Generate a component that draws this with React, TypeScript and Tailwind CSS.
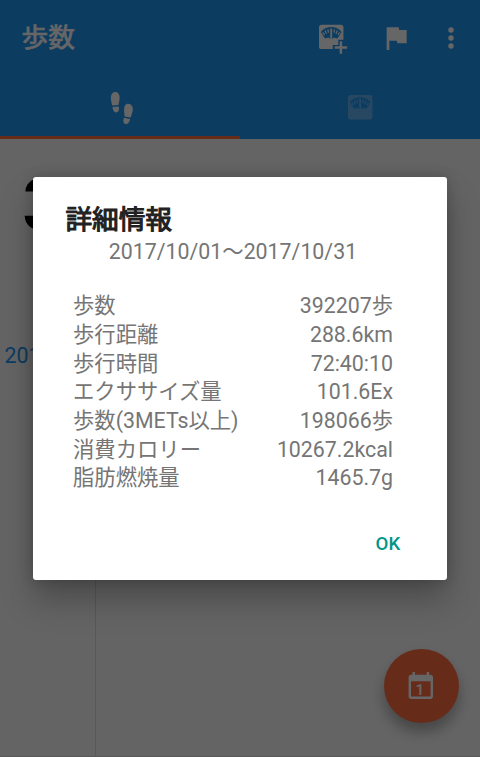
import React from 'react';

interface DetailRow {
  label: string;
  value: string;
}

const details: DetailRow[] = [
  { label: '歩数', value: '392207歩' },
  { label: '歩行距離', value: '288.6km' },
  { label: '歩行時間', value: '72:40:10' },
  { label: 'エクササイズ量', value: '101.6Ex' },
  { label: '歩数(3METs以上)', value: '198066歩' },
  { label: '消費カロリー', value: '10267.2kcal' },
  { label: '脂肪燃焼量', value: '1465.7g' },
];

// Rounded plate with the dial of a bathroom scale
const ScalePlate: React.FC = () => (
  <>
    <rect x="0" y="0" width="24.4" height="24.4" rx="2.6" fill="#fff" />
    <path d="M1.800 7.200C4.400 3.800 8 2.200 12.200 2.200s7.800 1.600 10.400 5l-4.200 6.600-3.600-.9-1 .9h-3.200l-1-.9-3.600.9z" fill="#2196f3" />
    <g stroke="#fff">
      <path d="M12.200 3.800V14" strokeWidth="1.800" />
      <path d="M8.900 4.600L9.500 8" strokeWidth="1.200" />
      <path d="M15.500 4.600L14.900 8" strokeWidth="1.200" />
      <path d="M6.100 5.800L7.500 9" strokeWidth="1.200" />
      <path d="M18.300 5.800L16.900 9" strokeWidth="1.200" />
      <path d="M3.800 7.700L5.600 10.300" strokeWidth="1.200" />
      <path d="M20.600 7.700L18.800 10.300" strokeWidth="1.200" />
    </g>
  </>
);

const ScaleAddIcon: React.FC = () => (
  <svg width="32" height="32" viewBox="0 0 32 32">
    <g transform="translate(2 2.700)">
      <ScalePlate />
    </g>
    <path d="M15.800 28.500v-5.500h5.500v-5.300h6V29z" fill="#2196f3" />
    <path d="M22.700 19.300h2.400v5h5v2.400h-5v5h-2.400v-5h-5v-2.400h5z" fill="#fff" />
  </svg>
);

const ScaleIcon: React.FC = () => (
  <svg className="opacity-30" width="25" height="25" viewBox="0 0 25 25">
    <ScalePlate />
  </svg>
);

const FlagIcon: React.FC = () => (
  <svg width="32" height="32" viewBox="0 0 24 24" fill="#fff">
    <path d="M14.400 6L14 4H5v17h2v-7h5.600l.4 2h7V6z" />
  </svg>
);

const MoreIcon: React.FC = () => (
  <svg width="8" height="32" viewBox="0 0 8 32" fill="#fff">
    <circle cx="4" cy="8" r="2.700" />
    <circle cx="4" cy="16" r="2.700" />
    <circle cx="4" cy="24" r="2.700" />
  </svg>
);

const StepsIcon: React.FC = () => (
  <svg width="24" height="34" viewBox="0 0 24 34" fill="#fff">
    <path d="M5.300 1C2.500 1 .9 3.500.9 6.800c0 2.800.8 5 1.300 7.700l6.300-.4c0-2.300 1.100-4.200 1.100-7.200C9.600 3.500 8.300 1 5.300 1z" />
    <path d="M2.500 16.100l6.300-.5c.6 3.200-.1 5.600-2.300 5.800-2.500.2-3.700-2-4-5.300z" />
    <path d="M18.400 12.700c2.900.2 4.700 2.900 4.400 6.200-.3 2.900-1.600 5-2.100 7.600l-6.200-1.100c.2-2.400-.7-4.300-.4-7.300.3-3.200 1.500-5.600 4.300-5.400z" />
    <path d="M13.900 26.800l6.200 1.200c-.5 3.100-2.200 5.300-4.500 5-2.300-.3-2.700-3-1.700-6.200z" />
  </svg>
);

const CalendarIcon: React.FC = () => (
  <svg width="26" height="28" viewBox="0 0 26 28">
    <path d="M4.500 0h2.400v2.800h11.800V0h2.400v2.800h1.400c1.400 0 2.500 1.100 2.500 2.500v19.200c0 1.400-1.100 2.500-2.500 2.500h-19.400c-1.400 0-2.500-1.100-2.500-2.500V5.300c0-1.400 1.100-2.500 2.500-2.500h1.400zM3 9.300v15.200h19.600V9.300z" fill="#fff" fillRule="evenodd" />
    <text x="12" y="22.500" textAnchor="middle" className="font-['Roboto',sans-serif] text-[15.500px] font-medium" fill="#fff">1</text>
  </svg>
);

const DetailDialog: React.FC = () => (
  <div
    role="dialog"
    className="mt-[177px] ml-[33.400px] h-[403px] w-[413.400px] rounded-[3px] bg-white pt-[24.500px] shadow-[0_20px_32px_rgba(0,0,0,0.25),0_0_14px_rgba(0,0,0,0.2)]"
  >
    <h2 className="pl-8 text-[26.67px] leading-[36px] text-[#212121] [-webkit-text-stroke:1.100px_#212121]">詳細情報</h2>
    <div className="ml-[39.600px] w-80 text-[21.33px] text-[#757575]">
      <p className="text-center leading-[28.67px]">2017/10/01～2017/10/31</p>
      <dl className="mt-[26px]">
        {details.map((row) => (
          <div key={row.label} className="flex justify-between leading-[28.67px] whitespace-nowrap">
            <dt>{row.label}</dt>
            <dd>{row.value}</dd>
          </div>
        ))}
      </dl>
    </div>
    <div className="mt-[38.200px] flex justify-end pr-[46.600px]">
      <button className="text-[18.67px] leading-[26px] font-medium text-[#009688]">OK</button>
    </div>
  </div>
);

export default function App() {
  return (
    <div className="relative flex h-[757px] w-[480px] flex-col overflow-hidden bg-[#fafafa] font-[Roboto,'Noto_Sans_CJK_JP',sans-serif]" lang="ja">
      <header className="h-[138.500px] shrink-0 bg-[#2196f3] text-white">
        <div className="flex h-[75px] items-center pr-[25.500px] pl-[21.500px]">
          <h1 className="flex-1 text-[26.67px] leading-[36px] [-webkit-text-stroke:0.700px_#fff]">歩数</h1>
          <ScaleAddIcon />
          <div className="ml-[31px]">
            <FlagIcon />
          </div>
          <div className="ml-[34.500px]">
            <MoreIcon />
          </div>
        </div>
        <nav className="grid h-[63.500px] grid-cols-2">
          <div className="flex items-center justify-center border-b-[3px] border-[#ff6e40] pt-[5.500px] pl-[4px]">
            <StepsIcon />
          </div>
          <div className="flex items-center justify-center pt-[2px]">
            <ScaleIcon />
          </div>
        </nav>
      </header>

      <main className="flex flex-1 flex-col border-b border-[#dddddd]">
        <p className="h-[190px] pt-[22px] pl-[22.500px] text-[72px] leading-[90px] font-bold text-black">3</p>
        <div className="flex flex-1">
          <div className="w-[95px] pt-[12px] pl-[4.500px] text-[21.33px] leading-[29px] text-[#2196f3]">2017</div>
          <div className="mt-[40px] flex-1 border-l border-[#dddddd]" />
        </div>
      </main>

      <button className="absolute top-[648.700px] left-[384px] flex h-[74.67px] w-[74.67px] items-center justify-center rounded-full bg-[#ff6e40] shadow-[0_9px_14px_rgba(0,0,0,0.3)]">
        <CalendarIcon />
      </button>

      <div className="absolute inset-0 bg-black/60">
        <DetailDialog />
      </div>
    </div>
  );
}
